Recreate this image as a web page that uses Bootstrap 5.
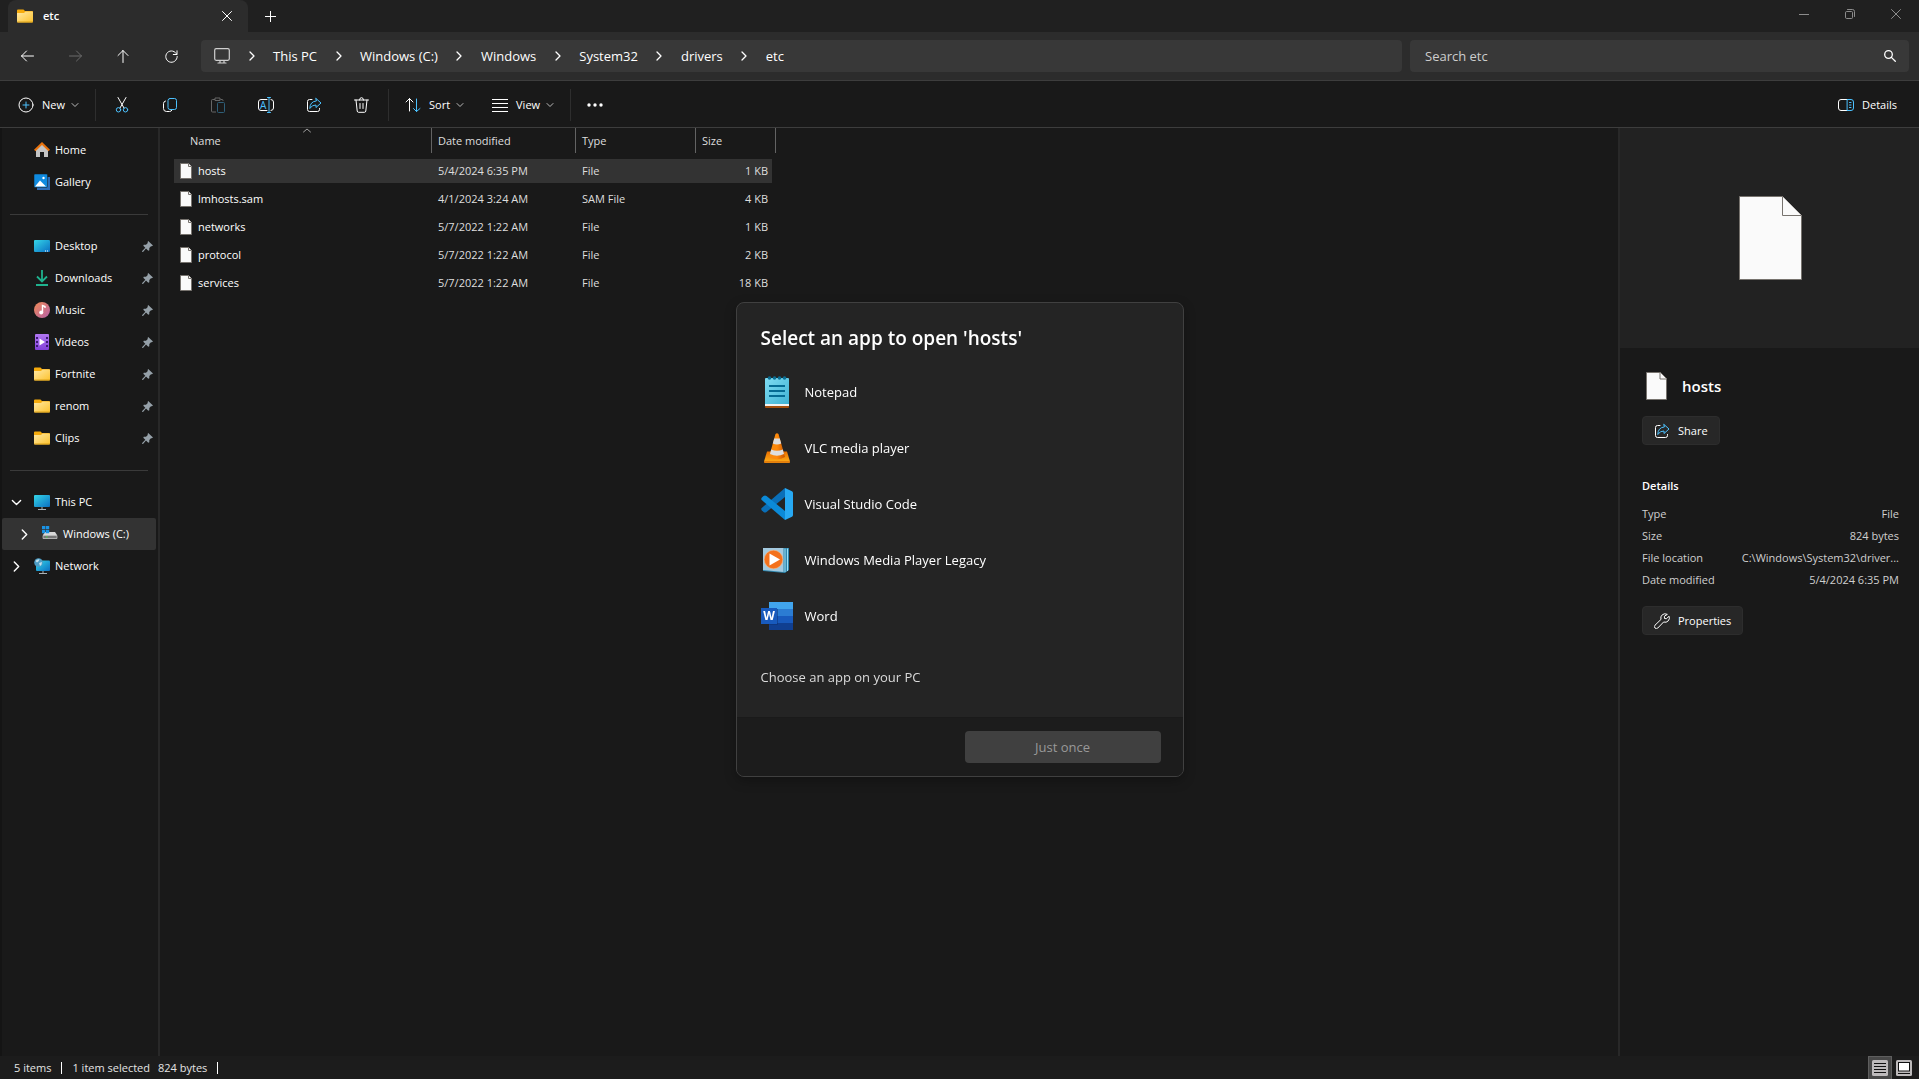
<!DOCTYPE html>
<html lang="en" data-bs-theme="dark">
<head>
<meta charset="utf-8">
<meta name="viewport" content="width=device-width, initial-scale=1">
<title>etc - File Explorer</title>
<link href="https://cdn.jsdelivr.net/npm/bootstrap@5.3.0/dist/css/bootstrap.min.css" rel="stylesheet">
<style>
body{font-family:"Open Sans","Noto Sans",sans-serif;font-size:11px;line-height:16px;color:#fff;background:#191919}
button{font-family:inherit;color:inherit;background:none;border:0;padding:0}
a{color:inherit;text-decoration:none}
svg{display:block;flex:none}
.ln{fill:none;stroke:currentColor;stroke-linecap:round;stroke-linejoin:round}
.sky{stroke:#4cc2ff}
.titlebar{height:32px;background:#202020;padding-left:8px}
.filetab{width:240px;background:#2c2c2c;border-radius:8px 8px 0 0;padding:0 12px 0 9px}
.tab-title{padding-left:10px}
.newtab{width:45px;height:32px}
.winbtn{width:46px;height:28px;color:#8c8c8c}
.navstrip{height:49px;background:#2c2c2c;border-bottom:1px solid #3d3d3d;padding:0 10px 0 3px}
.navbtn{width:48px;height:32px}
.navbtn:disabled{color:#6b6b6b}
.field{height:32px;background:#383838;border-radius:4px}
.path-bar{margin-left:6px;padding-left:13px;font-size:13px}
.crumb-sep{width:43px}
.searchbox{width:499px;padding:0 13px 0 15px}
.searchbox input{background:none;border:0;outline:0;font-size:13px;color:#fff;padding:0}
.searchbox input::placeholder{color:#cdcdcd;opacity:1}
.toolstrip{height:47px;border-bottom:1px solid #3d3d3d;padding:2px 18px 0}
.toolbtn{width:48px;height:32px}
.tool-group{padding:0 2px}
.chev{margin-left:6px;opacity:.7}
.vline{width:1px;height:32px;background:#2e2e2e}
.side{width:160px;border-left:2px solid #141414;border-right:2px solid #282828;padding-top:6px}
.side-row{height:32px;padding-right:5px;gap:5px}
.side-row.nested{padding-left:8px}
.side-row.current{background:#333;margin-right:2px;border-radius:2px}
.side-slot{width:28px;margin-right:-1px}
.side-rule{height:32px;padding:0 10px 0 8px}
.side-rule div{height:1px;width:100%;background:#3a3a3a}
.files{padding-left:14px}
.file-table{width:598px;table-layout:fixed;border-collapse:separate;border-spacing:0}
.file-table th{height:29px;padding:0 0 3px 6px;font-weight:400;color:#dedede;position:relative}
.file-table th:first-child{padding-left:16px}
.file-table th::after{content:"";position:absolute;right:0;top:0;width:1px;height:25px;background:#636363}
.file-table th:last-child::after{right:-4px}
.file-table td{height:28px;padding:0 4px 0 6px;color:#dedede;border:solid transparent;border-width:2px 0;background-clip:padding-box}
.file-table td:first-child{color:#fff}
.file-table tr.picked td{background-color:#333}
.file-name{gap:6px}
.caret-up{position:absolute;left:128px;top:0;color:#a0a0a0}
.info{width:301px;border-left:2px solid #282828}
.preview{height:220px;background:#222;padding-left:2px}
.info-body{padding:24px 20px 0 22px}
.info-head{height:28px;padding-left:4px;margin-bottom:16px;gap:15px;font-size:15px;font-weight:600}
.info-btn{height:29px;background:#272727;border:1px solid #2d2d2d;border-radius:4px;padding:0 11px}
.facts-title{font-size:11px;line-height:16px;font-weight:600;margin:33px 0 0;padding-bottom:9px}
.facts{margin:0 0 15px;color:#cfcfcf}
.facts div{height:22px}
.statusbar{height:23px;background:#1c1c1c;padding:0 3px 0 14px;color:#e4e4e4}
.tick{width:1px;height:12px;background:#fff;margin:0 10px}
.viewbtn{width:24px;height:23px}
.viewbtn.on{background:#484848;border:1px solid #5e5e5e;border-bottom:0}
.picker .modal-dialog{width:448px;max-width:448px;margin-top:0;margin-bottom:0;min-height:100%}
.picker .modal-content{background:#242424;border:1px solid #404040;border-radius:8px;overflow:hidden;box-shadow:0 4px 12px #0004}
.picker .modal-body{padding:19px 24px 24px}
.picker h1{font-size:19px;line-height:32px;font-weight:600;margin:0 0 10px}
.app-row{height:56px;font-size:13px;gap:12px;width:100%;text-align:left}
.choose{height:32px;margin-top:17px;margin-bottom:0;font-size:13px;color:#dadada}
.picker .modal-footer{background:#1c1c1c;border-top:1px solid #1a1a1a;padding:13px 22px 13px 0;border-radius:0}
.once{width:196px;height:32px;margin:0;border-radius:4px;background:#404040;color:#999;font-size:13px}
</style>
<script src="https://cdn.jsdelivr.net/npm/bootstrap@5.3.0/dist/js/bootstrap.bundle.min.js"></script>
</head>
<body class="vh-100 d-flex flex-column overflow-hidden">
<svg width="0" height="0" class="position-absolute" aria-hidden="true">
  <defs>
    <linearGradient id="gFolder" x1="0" y1="0" x2="1" y2="1"><stop offset="0" stop-color="#ffe9a6"/><stop offset="1" stop-color="#fdc22d"/></linearGradient>
    <linearGradient id="gScreen" x1="0" y1="0" x2="1" y2="1"><stop offset="0" stop-color="#35d6e8"/><stop offset="1" stop-color="#0a6fc2"/></linearGradient>
    <linearGradient id="gMusic" x1="0" y1="0" x2="1" y2="1"><stop offset="0" stop-color="#f08a55"/><stop offset="1" stop-color="#b560a8"/></linearGradient>
    <linearGradient id="gVideo" x1="0" y1="0" x2="0" y2="1"><stop offset="0" stop-color="#b177f2"/><stop offset="1" stop-color="#8240d8"/></linearGradient>
    <linearGradient id="gPad" x1="0" y1="0" x2="1" y2="1"><stop offset="0" stop-color="#7fdcf2"/><stop offset="1" stop-color="#3fb2d4"/></linearGradient>
    <linearGradient id="gCone" x1="0" y1="0" x2="1" y2="0"><stop offset="0" stop-color="#f58a10"/><stop offset=".5" stop-color="#ff8a0a"/><stop offset="1" stop-color="#c95500"/></linearGradient>
    <linearGradient id="gBase" x1="0" y1="0" x2="0" y2="1"><stop offset="0" stop-color="#e86f00"/><stop offset="1" stop-color="#ffb21a"/></linearGradient>
    <symbol id="folder" viewBox="0 0 16 16"><path d="M0 2.500Q0 1.500 1 1.500H6.500L8 3H15Q16 3 16 4V7H0Z" fill="#f6ab0c"/><path d="M0 5H7L8.500 3.500H15.500L16 4V13Q16 14.500 15 14.500H1Q0 14.500 0 13.500Z" fill="url(#gFolder)"/><path d="M.3 14H15.700" stroke="#dba017"/></symbol>
    <symbol id="pin" viewBox="0 0 11 11"><path d="M6.200 0 11 4.600 9.800 5.300 9 5.200 7.300 7 7.300 9.300 6.300 9.800 4 7.500 1 11 0 10.800 .2 10 3.300 6.800 1.300 4.700 1.800 3.800 4 3.700 5.800 1.900 5.600 1Z" fill="#95a0a8"/></symbol>
    <symbol id="sheet" viewBox="0 0 12 16"><path d="M.5.5H8.500L11.500 3.500V15.500H.5Z" fill="#fafafa" stroke="#77736e"/><path d="M8.500.5V3.500H11.500" fill="#fafafa" stroke="#77736e"/></symbol>
    <symbol id="right" viewBox="0 0 10 10"><path class="ln" stroke-width="1.300" d="M3 1 7 5 3 9"/></symbol>
    <symbol id="down" viewBox="0 0 8 8"><path class="ln" d="M1 2.500 4 5.500 7 2.500"/></symbol>
    <symbol id="share" viewBox="0 0 16 16"><path class="ln" d="M6 2.500H3.500Q1.500 2.500 1.500 4.500V12.500Q1.500 14.500 3.500 14.500H11.500Q13.500 14.500 13.500 12.500V11.500"/><path class="ln sky" d="M10 1.500 15 6 10 10.500V8Q6 7.800 3.800 11.500 4 4.500 10 4Z"/></symbol>
    <symbol id="cross" viewBox="0 0 10 10"><path class="ln" d="M.5.5 9.500 9.500M9.500.5.5 9.500"/></symbol>
  </defs>
</svg>

<header>
  <div class="titlebar d-flex align-items-center">
    <div class="filetab d-flex align-items-center h-100">
      <svg width="16" height="16"><use href="#folder"/></svg>
      <span class="tab-title fw-semibold flex-grow-1">etc</span>
      <button aria-label="Close tab" class="p-1"><svg width="10" height="10"><use href="#cross"/></svg></button>
    </div>
    <button aria-label="New tab" class="newtab d-flex justify-content-center align-items-center"><svg width="11" height="11" viewBox="0 0 11 11"><path class="ln" d="M5.500 0V11M0 5.500H11"/></svg></button>
    <div class="d-flex ms-auto align-self-start">
      <button aria-label="Minimize" class="winbtn d-flex justify-content-center align-items-center"><svg width="10" height="10"><path class="ln" d="M0 5.500H10"/></svg></button>
      <button aria-label="Restore" class="winbtn d-flex justify-content-center align-items-center"><svg width="10" height="10"><path class="ln" d="M.5 3.500Q.5 2.500 1.500 2.500H6.500Q7.500 2.500 7.500 3.500V8.500Q7.500 9.500 6.500 9.500H1.500Q.5 9.500 .5 8.500ZM2.500.5H7.500Q9.500.5 9.500 2.500V7.500"/></svg></button>
      <button aria-label="Close" class="winbtn d-flex justify-content-center align-items-center"><svg width="10" height="10"><use href="#cross"/></svg></button>
    </div>
  </div>

  <div class="navstrip d-flex align-items-center">
    <button aria-label="Back" class="navbtn d-flex justify-content-center align-items-center"><svg width="13" height="12" viewBox="0 0 13 12"><path class="ln" d="M12.500 6H.5M5.500 1 .5 6 5.500 11"/></svg></button>
    <button aria-label="Forward" disabled class="navbtn d-flex justify-content-center align-items-center"><svg width="13" height="12" viewBox="0 0 13 12"><path class="ln" d="M.5 6H12.500M7.500 1 12.500 6 7.500 11"/></svg></button>
    <button aria-label="Up" class="navbtn d-flex justify-content-center align-items-center"><svg width="12" height="13" viewBox="0 0 12 13"><path class="ln" d="M6 12.500V.5M1 5.500 6 .5 11 5.500"/></svg></button>
    <button aria-label="Refresh" class="navbtn d-flex justify-content-center align-items-center"><svg width="13" height="13" viewBox="0 0 13 13"><path class="ln" d="M11.800 4.500A5.700 5.700 0 1 0 12.200 6.500M12 .8V4.500H8.300"/></svg></button>
    <nav aria-label="Address" class="field path-bar flex-grow-1 d-flex align-items-center me-2">
      <svg width="16" height="16" viewBox="0 0 16 16" color="#d0d0d0"><rect class="ln" x=".7" y=".7" width="14.600" height="11.600" rx="1.500" stroke-width="1.200"/><path class="ln" stroke-width="1.200" d="M6 12.500V15M10 12.500V15M4 15H12"/></svg>
      <span class="crumb-sep d-flex justify-content-center"><svg width="10" height="10"><use href="#right"/></svg></span>
      <a href="#">This PC</a><span class="crumb-sep d-flex justify-content-center"><svg width="10" height="10"><use href="#right"/></svg></span>
      <a href="#">Windows (C:)</a><span class="crumb-sep d-flex justify-content-center"><svg width="10" height="10"><use href="#right"/></svg></span>
      <a href="#">Windows</a><span class="crumb-sep d-flex justify-content-center"><svg width="10" height="10"><use href="#right"/></svg></span>
      <a href="#">System32</a><span class="crumb-sep d-flex justify-content-center"><svg width="10" height="10"><use href="#right"/></svg></span>
      <a href="#">drivers</a><span class="crumb-sep d-flex justify-content-center"><svg width="10" height="10"><use href="#right"/></svg></span>
      <a href="#">etc</a>
    </nav>
    <div class="field searchbox d-flex align-items-center">
      <input type="text" class="flex-grow-1" placeholder="Search etc" aria-label="Search etc">
      <svg width="12" height="12" viewBox="0 0 12 12"><circle class="ln" cx="4.500" cy="4.500" r="3.800" stroke-width="1.300"/><path class="ln" stroke-width="1.300" d="M7.400 7.400 11.300 11.300"/></svg>
    </div>
  </div>

  <div class="toolstrip d-flex align-items-center">
    <button class="d-flex align-items-center"><svg class="me-2" width="16" height="16" viewBox="0 0 16 16"><circle class="ln" cx="8" cy="8" r="7"/><path class="ln sky" d="M8 5V11M5 8H11"/></svg>New<svg class="chev" width="8" height="8"><use href="#down"/></svg></button>
    <div class="vline ms-3"></div>
    <div class="tool-group d-flex">
      <button aria-label="Cut" class="toolbtn d-flex justify-content-center align-items-center"><svg width="16" height="16" viewBox="0 0 16 16"><path class="ln" d="M4 .5 10 11M12 .5 6 11"/><circle class="ln sky" cx="4.500" cy="12.800" r="2.200"/><circle class="ln sky" cx="11.500" cy="12.800" r="2.200"/></svg></button>
      <button aria-label="Copy" class="toolbtn d-flex justify-content-center align-items-center"><svg width="16" height="16" viewBox="0 0 16 16"><path class="ln" d="M3.500 4Q1.500 4.500 1.500 6.500V11.500Q1.500 14.500 4.500 14.500H7.500Q9.500 14.500 10 13"/><rect class="ln sky" x="6" y="1.500" width="8.500" height="11" rx="2"/></svg></button>
      <button aria-label="Paste" disabled class="toolbtn d-flex justify-content-center align-items-center"><svg width="16" height="16" viewBox="0 0 16 16" fill="none" stroke-linejoin="round"><path stroke="#666" d="M5 2.500H2.500Q1.500 2.500 1.500 3.500V14Q1.500 15 2.500 15H6M10.500 2.500H12Q13 2.500 13 3.500V4M5 1H10V3.500H5Z"/><rect stroke="#2f5f78" x="7.500" y="5.500" width="7" height="10" rx="1"/></svg></button>
      <button aria-label="Rename" class="toolbtn d-flex justify-content-center align-items-center"><svg width="16" height="16" viewBox="0 0 16 16"><path class="ln" d="M9 2.500H3Q.5 2.500 .5 5V11Q.5 13.500 3 13.500H9M13 2.500Q15.500 2.700 15.500 5V11Q15.500 13.300 13 13.500"/><path class="ln sky" d="M11 .5V15.500M9.500 .5H12.500M9.500 15.500H12.500"/><text x="2" y="11.500" font-size="10" fill="#4cc2ff">A</text></svg></button>
      <button aria-label="Share" class="toolbtn d-flex justify-content-center align-items-center"><svg width="16" height="16"><use href="#share"/></svg></button>
      <button aria-label="Delete" class="toolbtn d-flex justify-content-center align-items-center"><svg width="15" height="16" viewBox="0 0 15 16"><path class="ln" d="M.5 3H14.500M5.500 3Q5.500.7 7.500.7 9.500.7 9.500 3M2 3 3.200 14Q3.400 15.300 4.500 15.300H10.500Q11.600 15.300 11.800 14L13 3M6 6.500V11.500M9 6.500V11.500"/></svg></button>
    </div>
    <div class="vline"></div>
    <button class="d-flex align-items-center ms-3"><svg class="me-2" width="16" height="16" viewBox="0 0 16 16"><path class="ln" d="M4.500 14V1.500M1 5 4.500 1.500 8 5"/><path class="ln sky" d="M11.500 2V14.500M8.500 11.500 11.500 14.500 15 11.500"/></svg>Sort<svg class="chev" width="8" height="8"><use href="#down"/></svg></button>
    <button class="d-flex align-items-center ms-4 ps-1"><svg class="me-2" width="16" height="16" viewBox="0 0 16 16"><path class="ln" d="M0 2.500H16M0 6.500H16M0 10.500H16M0 14.500H16"/></svg>View<svg class="chev" width="8" height="8"><use href="#down"/></svg></button>
    <div class="vline ms-3"></div>
    <button aria-label="See more" class="toolbtn d-flex justify-content-center align-items-center"><svg width="16" height="4" fill="#fff"><circle cx="2" cy="2" r="1.700"/><circle cx="8" cy="2" r="1.700"/><circle cx="14" cy="2" r="1.700"/></svg></button>
    <button class="d-flex align-items-center ms-auto pe-1"><svg class="me-2" width="16" height="12" viewBox="0 0 16 12"><path class="ln" d="M9.500.5H3Q.5.5.5 3V9Q.5 11.500 3 11.500H9.500"/><path class="ln sky" d="M9.500.5H13Q15.500.5 15.500 3V9Q15.500 11.500 13 11.500H9.500ZM11.500 3.500H13M11.500 6H13M11.500 8.500H13"/></svg>Details</button>
  </div>
</header>

<main class="d-flex flex-grow-1 overflow-hidden">
  <nav class="side flex-shrink-0" aria-label="Folders">
    <a href="#" class="side-row d-flex align-items-center"><span class="side-slot"></span><svg width="16" height="16" viewBox="0 0 16 16"><path d="M2 7 8 2 14 7V15H10V10H6V15H2Z" fill="#c4c4c4"/><path d="M.7 8.500 8 1.500 15.300 8.500" fill="none" stroke="#e8720c" stroke-width="2.200"/></svg><span>Home</span></a>
    <a href="#" class="side-row d-flex align-items-center"><span class="side-slot"></span><svg width="16" height="16" viewBox="0 0 16 16"><path d="M3 3H16V16H3Z" fill="#2b6cb8"/><rect width="13.500" height="13.500" rx="1" fill="#0f8be0" stroke="#191919" stroke-width=".5"/><path d="M1 12.500 6 6.500 12 12.500Z" fill="#fff"/><circle cx="9.500" cy="4" r="1.200" fill="#fff"/></svg><span>Gallery</span></a>
    <div class="side-rule d-flex align-items-center"><div></div></div>
    <a href="#" class="side-row d-flex align-items-center"><span class="side-slot"></span><svg width="16" height="16" viewBox="0 0 16 16"><rect y="2" width="16" height="12" rx="1" fill="url(#gScreen)"/><path d="M11 13H12M13 13H14" stroke="#fff"/></svg><span class="flex-grow-1">Desktop</span><svg width="11" height="11"><use href="#pin"/></svg></a>
    <a href="#" class="side-row d-flex align-items-center"><span class="side-slot"></span><svg width="16" height="16" viewBox="0 0 16 16"><path d="M8 0V11M3 6.500 8 11.500 13 6.500M2 15H14" fill="none" stroke="#1fb28e" stroke-width="1.800"/></svg><span class="flex-grow-1">Downloads</span><svg width="11" height="11"><use href="#pin"/></svg></a>
    <a href="#" class="side-row d-flex align-items-center"><span class="side-slot"></span><svg width="16" height="16" viewBox="0 0 16 16"><circle cx="8" cy="8" r="8" fill="url(#gMusic)"/><circle cx="7.200" cy="10.500" r="2" fill="#fff"/><path d="M8.500 10.500V3.500L11 4.500V6" fill="none" stroke="#fff" stroke-width="1.400"/></svg><span class="flex-grow-1">Music</span><svg width="11" height="11"><use href="#pin"/></svg></a>
    <a href="#" class="side-row d-flex align-items-center"><span class="side-slot"></span><svg width="16" height="16" viewBox="0 0 16 16"><rect x="1" width="14" height="16" rx="1" fill="url(#gVideo)"/><path d="M3 3V14M13 3V14" stroke="#3b1a73" stroke-width="2" stroke-dasharray="2 2"/><path d="M5.500 4.500 11 8 5.500 11.500Z" fill="#fff"/></svg><span class="flex-grow-1">Videos</span><svg width="11" height="11"><use href="#pin"/></svg></a>
    <a href="#" class="side-row d-flex align-items-center"><span class="side-slot"></span><svg width="16" height="16"><use href="#folder"/></svg><span class="flex-grow-1">Fortnite</span><svg width="11" height="11"><use href="#pin"/></svg></a>
    <a href="#" class="side-row d-flex align-items-center"><span class="side-slot"></span><svg width="16" height="16"><use href="#folder"/></svg><span class="flex-grow-1">renom</span><svg width="11" height="11"><use href="#pin"/></svg></a>
    <a href="#" class="side-row d-flex align-items-center"><span class="side-slot"></span><svg width="16" height="16"><use href="#folder"/></svg><span class="flex-grow-1">Clips</span><svg width="11" height="11"><use href="#pin"/></svg></a>
    <div class="side-rule d-flex align-items-center"><div></div></div>
    <a href="#" class="side-row d-flex align-items-center"><span class="side-slot d-flex justify-content-center"><svg width="11" height="11"><use href="#down"/></svg></span><svg width="16" height="16" viewBox="0 0 16 16"><rect y="1" width="16" height="12" rx="1" fill="url(#gScreen)"/><path d="M8 13V15M4 15.500H12" stroke="#a9b2b8"/></svg><span>This PC</span></a>
    <a href="#" class="side-row nested current d-flex align-items-center"><span class="side-slot d-flex justify-content-center"><svg width="11" height="11"><use href="#right"/></svg></span><svg width="16" height="16" viewBox="0 0 16 16"><path d="M3 6H13L15 9V12.500H1V9Z" fill="#d9d9d9"/><path d="M1 9.500H15V12.500H1Z" fill="#777" stroke="#bbb" stroke-width=".8"/><path d="M4 11H5.500" stroke="#3ee04a"/><path d="M0 0H3.300V3.300H0ZM3.900 0H7.200V3.300H3.900ZM0 3.900H3.300V7.200H0ZM3.900 3.900H7.200V7.200H3.900Z" fill="#1a93e6"/></svg><span>Windows (C:)</span></a>
    <a href="#" class="side-row d-flex align-items-center"><span class="side-slot d-flex justify-content-center"><svg width="11" height="11"><use href="#right"/></svg></span><svg width="16" height="16" viewBox="0 0 16 16"><rect x="2" y="2.500" width="14" height="10.500" rx="1" fill="url(#gScreen)"/><path d="M9 13V15M5 15.500H13" stroke="#a9b2b8"/><circle cx="4.500" cy="4.500" r="4.300" fill="#4d9cc4"/><path d="M1.500 3Q3 .8 5.500 1.200 5 3.500 3 4.500ZM5 5 8 4Q8 7 6 8Z" fill="#c3e1ee"/></svg><span>Network</span></a>
  </nav>

  <section class="files flex-grow-1" aria-label="Items">
    <table class="file-table">
      <colgroup><col style="width:258px"><col style="width:144px"><col style="width:120px"><col></colgroup>
      <thead><tr><th scope="col">Name<svg class="caret-up" width="10" height="5" viewBox="0 0 10 5"><path class="ln" d="M1.500 4 5 1 8.500 4"/></svg></th><th scope="col">Date modified</th><th scope="col">Type</th><th scope="col">Size</th></tr></thead>
      <tbody>
        <tr class="picked"><td><div class="file-name d-flex align-items-center"><svg width="12" height="16"><use href="#sheet"/></svg>hosts</div></td><td>5/4/2024 6:35 PM</td><td>File</td><td class="text-end">1 KB</td></tr>
        <tr><td><div class="file-name d-flex align-items-center"><svg width="12" height="16"><use href="#sheet"/></svg>lmhosts.sam</div></td><td>4/1/2024 3:24 AM</td><td>SAM File</td><td class="text-end">4 KB</td></tr>
        <tr><td><div class="file-name d-flex align-items-center"><svg width="12" height="16"><use href="#sheet"/></svg>networks</div></td><td>5/7/2022 1:22 AM</td><td>File</td><td class="text-end">1 KB</td></tr>
        <tr><td><div class="file-name d-flex align-items-center"><svg width="12" height="16"><use href="#sheet"/></svg>protocol</div></td><td>5/7/2022 1:22 AM</td><td>File</td><td class="text-end">2 KB</td></tr>
        <tr><td><div class="file-name d-flex align-items-center"><svg width="12" height="16"><use href="#sheet"/></svg>services</div></td><td>5/7/2022 1:22 AM</td><td>File</td><td class="text-end">18 KB</td></tr>
      </tbody>
    </table>
  </section>

  <aside class="info flex-shrink-0" aria-label="Details pane">
    <div class="preview d-flex justify-content-center align-items-center">
      <svg width="63" height="84" viewBox="0 0 63 84"><path d="M.5.5H43.500L62.500 19.500V83.500H.5Z" fill="#fafafa" stroke="#77736e"/><path d="M43.500.5V19.500H62.500" fill="#fafafa" stroke="#77736e"/></svg>
    </div>
    <div class="info-body">
      <div class="info-head d-flex align-items-center"><svg width="21" height="28" viewBox="0 0 21 28"><path d="M.5.5H14.500L20.500 6.500V27.500H.5Z" fill="#fafafa" stroke="#77736e"/><path d="M14 .5V7H20.500" fill="none" stroke="#77736e"/></svg>hosts</div>
      <button class="info-btn d-flex align-items-center gap-2"><svg width="16" height="16"><use href="#share"/></svg>Share</button>
      <h2 class="facts-title">Details</h2>
      <dl class="facts">
        <div class="d-flex justify-content-between align-items-center"><dt class="fw-normal">Type</dt><dd class="mb-0">File</dd></div>
        <div class="d-flex justify-content-between align-items-center"><dt class="fw-normal">Size</dt><dd class="mb-0">824 bytes</dd></div>
        <div class="d-flex justify-content-between align-items-center"><dt class="fw-normal">File location</dt><dd class="mb-0">C:\Windows\System32\driver...</dd></div>
        <div class="d-flex justify-content-between align-items-center"><dt class="fw-normal">Date modified</dt><dd class="mb-0">5/4/2024 6:35 PM</dd></div>
      </dl>
      <button class="info-btn d-flex align-items-center gap-2"><svg width="16" height="16" viewBox="0 0 16 16"><path class="ln" d="M13 1.200A4.300 4.300 0 0 0 7 6.400L1 12.200A1.900 1.900 0 0 0 3.800 15L9.600 9A4.300 4.300 0 0 0 15 3.200L12.500 5.700 10.500 5.500 10.400 3.600Z"/></svg>Properties</button>
    </div>
  </aside>
</main>

<footer class="statusbar d-flex align-items-center">
  <span>5 items</span><span class="tick"></span><span>1 item selected</span><span class="ms-2">824 bytes</span><span class="tick"></span>
  <div class="d-flex ms-auto">
    <button aria-label="Details view" class="viewbtn on d-flex justify-content-center align-items-center"><svg width="16" height="16" viewBox="0 0 16 16"><rect width="16" height="16" rx="1.500" fill="#bdbabb"/><path d="M2 3.500H14M2 6.500H14M2 9.500H14M2 12.500H14" stroke="#111"/></svg></button>
    <button aria-label="Large icons view" class="viewbtn d-flex justify-content-center align-items-center"><svg width="16" height="16" viewBox="0 0 16 16"><rect width="16" height="16" rx="1.500" fill="#bdbabb"/><rect x="2.500" y="2.500" width="11" height="8.500" fill="#fff" stroke="#111"/><path d="M2 13.500H14" stroke="#111"/></svg></button>
  </div>
</footer>

<div class="modal picker d-block" role="dialog" aria-labelledby="pickerTitle">
  <div class="modal-dialog modal-dialog-centered">
    <div class="modal-content">
      <div class="modal-body">
        <h1 id="pickerTitle">Select an app to open 'hosts'</h1>
        <button class="app-row d-flex align-items-center"><svg width="32" height="32" viewBox="0 0 32 32"><path d="M4 28H28V31Q28 32 27 32H5Q4 32 4 31Z" fill="#a5500f"/><path d="M4 27H28V30H4Z" fill="#f3f3f3"/><path d="M4 3Q4 2 5 2H27Q28 2 28 3V28H4Z" fill="url(#gPad)"/><path d="M8 10H24M8 15H24M8 20H24" stroke="#056b93" stroke-width="2"/><g fill="#0a6d92"><circle cx="8.500" cy="2" r="1.800"/><circle cx="13.500" cy="2" r="1.800"/><circle cx="18.500" cy="2" r="1.800"/><circle cx="23.500" cy="2" r="1.800"/></g></svg>Notepad</button>
        <button class="app-row d-flex align-items-center"><svg width="32" height="32" viewBox="0 0 32 32"><path d="M6 19.500H26L29 29.500Q29 31 28 31H4Q3 31 3 29.500Z" fill="url(#gBase)"/><path d="M3 30H29" stroke="#c95500"/><path d="M14.500 2Q16 .5 17.500 2L24 25Q16 29.500 8 25Z" fill="url(#gCone)"/><path d="M13.200 6.500H18.800L20.200 11.500Q16 13.500 11.800 11.500ZM10.200 17.500Q16 20 21.800 17.500L23 22Q16 25.500 9 22Z" fill="#dedede"/></svg>VLC media player</button>
        <button class="app-row d-flex align-items-center"><svg width="32" height="32" viewBox="0 0 32 32"><path d="M24 0V9L5.500 24Q4 25 2.500 24L.7 22.300Q-.3 21 .7 20Z" fill="#0a6fb8"/><path d="M24 32V23L5.500 8Q4 7 2.500 8L.7 9.700Q-.3 11 .7 12Z" fill="#0b8ad8"/><path d="M24 0 31 3.300Q32 3.800 32 5V27Q32 28.200 31 28.700L24 32Z" fill="#27a9f3"/></svg>Visual Studio Code</button>
        <button class="app-row d-flex align-items-center"><svg width="32" height="32" viewBox="0 0 32 32"><path d="M7 4H28V26L24 29 2 27V4Z" fill="#2f86ad"/><path d="M26.500 4.500V27M24 4.500V28" stroke="#9fe0f5"/><path d="M2 4H22.500V28L2 26Z" fill="#a3c9df"/><circle cx="12.500" cy="15.500" r="9.300" fill="#f4711c" stroke="#fbb37a" stroke-width=".6"/><path d="M8.500 9.500 19 15.500 8.500 21.500Z" fill="#fff"/></svg>Windows Media Player Legacy</button>
        <button class="app-row d-flex align-items-center"><svg width="32" height="32" viewBox="0 0 32 32"><path d="M8 2H32V9H8Z" fill="#41a5ee"/><path d="M8 9H32V16H8Z" fill="#2b7cd3"/><path d="M8 16H32V23H8Z" fill="#185abd"/><path d="M8 23H32V30H8Z" fill="#103f91"/><path d="M8 9H17V25H8Z" fill="#0b2f70" opacity=".5"/><rect y="8" width="16" height="16" fill="#185abd"/><text x="8" y="20" font-size="12" font-weight="700" text-anchor="middle" fill="#fff">W</text></svg>Word</button>
        <button class="choose d-flex align-items-center">Choose an app on your PC</button>
      </div>
      <div class="modal-footer"><button class="once" disabled>Just once</button></div>
    </div>
  </div>
</div>
</body>
</html>
